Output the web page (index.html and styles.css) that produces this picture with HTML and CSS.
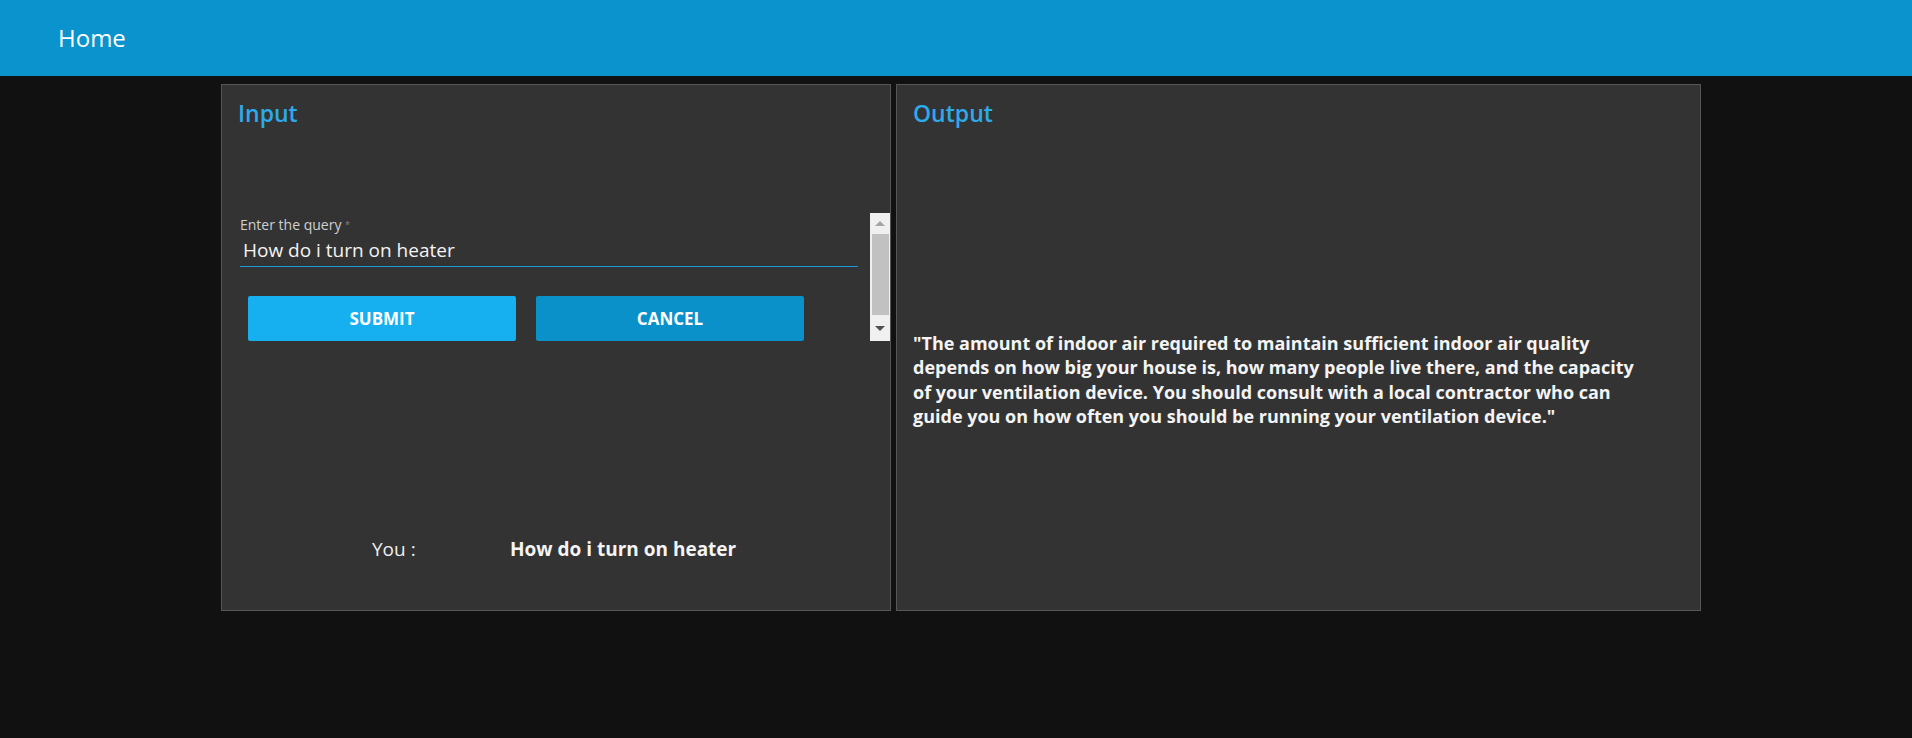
FILE: index.html
```html
<!DOCTYPE html>
<html lang="en">
<head>
<meta charset="utf-8">
<title>Home</title>
<link rel="stylesheet" href="styles.css">
</head>
<body>
<header class="topbar">
  <span class="brand">Home</span>
</header>
<main class="panels">
  <section class="panel panel-input">
    <h2 class="panel-title">Input</h2>
    <div class="form-area">
      <div class="form-content">
        <label class="field-label">Enter the query <span class="req">*</span></label>
        <div class="field-input">How do i turn on heater</div>
        <div class="actions">
          <button class="btn btn-submit">SUBMIT</button>
          <button class="btn btn-cancel">CANCEL</button>
        </div>
      </div>
      <div class="scrollbar">
        <span class="arrow arrow-up"></span>
        <span class="thumb"></span>
        <span class="arrow arrow-down"></span>
      </div>
    </div>
    <div class="chat-row">
      <span class="chat-who">You :</span>
      <span class="chat-msg">How do i turn on heater</span>
    </div>
  </section>
  <section class="panel panel-output">
    <h2 class="panel-title">Output</h2>
    <p class="answer">"The amount of indoor air required to maintain sufficient indoor air quality<br>depends on how big your house is, how many people live there, and the capacity<br>of your ventilation device. You should consult with a local contractor who can<br>guide you on how often you should be running your ventilation device."</p>
  </section>
</main>
</body>
</html>
```

FILE: styles.css
```css
* { box-sizing: border-box; }
html, body { margin: 0; padding: 0; }
body {
  background: #111111;
  font-family: "Open Sans", "Noto Sans", "Liberation Sans", sans-serif;
  color: #f2f2f2;
  height: 738px;
  overflow: hidden;
}
.topbar {
  height: 76px;
  background: #0a93cc;
  display: flex;
  align-items: center;
  padding-left: 58px;
}
.brand {
  font-size: 24px;
  color: #ffffff;
  line-height: 32px;
}
.panels {
  display: flex;
  gap: 5px;
  padding: 8px 0 0 221px;
}
.panel {
  height: 527px;
  background: #333333;
  border: 1px solid #565656;
  display: flex;
  flex-direction: column;
}
.panel-input { width: 670px; }
.panel-output { width: 805px; }
.panel-title {
  margin: 12px 0 0 16px;
  font-size: 23px;
  font-weight: 600;
  line-height: 32px;
  color: #2eaaea;
}
.form-area {
  margin-top: 84px;
  height: 128px;
  display: flex;
  padding-left: 18px;
}
.form-content {
  flex: 1;
  padding-top: 3px;
  padding-right: 12px;
}
.field-label {
  display: block;
  font-size: 14px;
  line-height: 18px;
  color: #cfcfcf;
}
.req { font-size: 9px; vertical-align: top; color: #888; }
.field-input {
  margin-top: 4px;
  font-size: 19px;
  line-height: 24px;
  padding: 0 0 4px 3px;
  border-bottom: 1px solid #1a9bd7;
  color: #f4f4f4;
}
.actions {
  display: flex;
  gap: 20px;
  margin: 29px 0 0 8px;
}
.btn {
  width: 268px;
  height: 45px;
  border: 0;
  border-radius: 2px;
  color: #ffffff;
  font-family: inherit;
  font-size: 17px;
  font-weight: 700;
  padding: 0;
}
.btn-submit { background: #16b0f0; }
.btn-cancel { background: #0a91ca; }
.scrollbar {
  width: 20px;
  height: 128px;
  background: #f0f0f0;
  display: flex;
  flex-direction: column;
  align-items: center;
}
.arrow {
  width: 0;
  height: 0;
  border-left: 5px solid transparent;
  border-right: 5px solid transparent;
}
.arrow-up {
  margin-top: 8px;
  border-bottom: 5px solid #a3a3a3;
}
.thumb {
  width: 17px;
  height: 81px;
  margin-top: 8px;
  background: #c1c1c1;
}
.arrow-down {
  margin-top: 11px;
  border-top: 5px solid #505050;
}
.chat-row {
  margin-top: 196px;
  display: flex;
  font-size: 19px;
  line-height: 24px;
}
.chat-who {
  margin-left: 150px;
  width: 138px;
  color: #eeeeee;
}
.chat-msg {
  font-weight: 700;
  color: #f4f4f4;
}
.answer {
  margin: 202px 0 0 16px;
  font-size: 18px;
  font-weight: 700;
  line-height: 24.4px;
  color: #f4f4f4;
  white-space: nowrap;
}
```
